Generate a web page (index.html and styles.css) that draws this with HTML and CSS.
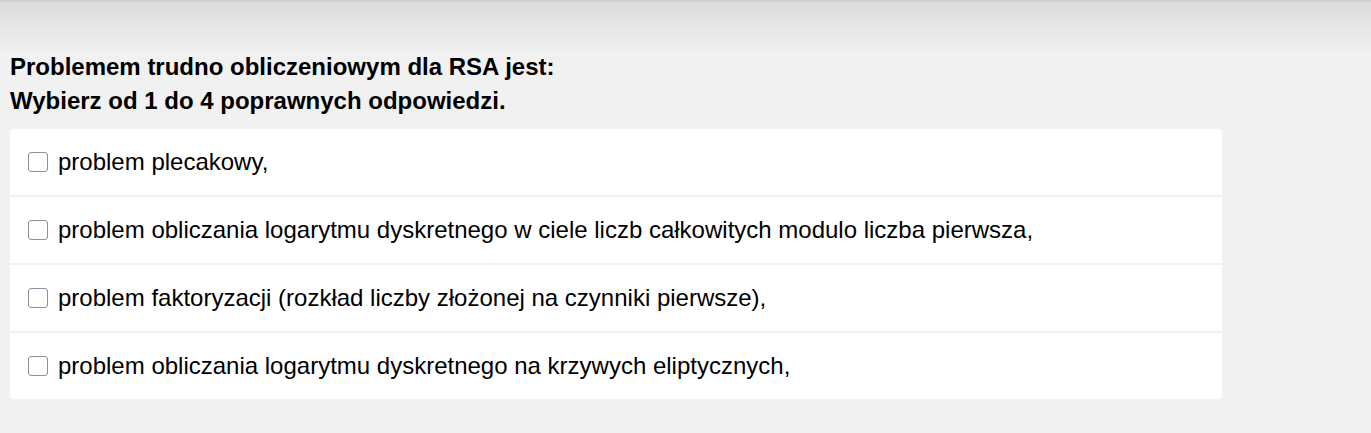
FILE: index.html
```html
<!DOCTYPE html>
<html lang="pl">
<head>
<meta charset="utf-8">
<link rel="stylesheet" href="styles.css">
</head>
<body>
<div class="page">
  <div class="question">
    <div class="q-line">Problemem trudno obliczeniowym dla RSA jest:</div>
    <div class="q-line">Wybierz od 1 do 4 poprawnych odpowiedzi.</div>
  </div>
  <div class="answers">
    <label class="answer"><span class="box"></span><span class="txt">problem plecakowy,</span></label>
    <label class="answer"><span class="box"></span><span class="txt">problem obliczania logarytmu dyskretnego w ciele liczb całkowitych modulo liczba pierwsza,</span></label>
    <label class="answer"><span class="box"></span><span class="txt">problem faktoryzacji (rozkład liczby złożonej na czynniki pierwsze),</span></label>
    <label class="answer"><span class="box"></span><span class="txt">problem obliczania logarytmu dyskretnego na krzywych eliptycznych,</span></label>
  </div>
</div>
</body>
</html>
```
FILE: styles.css
```css
html, body {
  margin: 0;
  padding: 0;
}
body {
  background: #f1f1f1;
  font-family: "Liberation Sans", Arial, sans-serif;
  color: #000;
}
.page {
  min-height: 433px;
  box-sizing: border-box;
  border-top: 2px solid #d0d0d0;
  background: linear-gradient(to bottom, #dcdcdc 0px, #f1f1f1 52px, #f1f1f1 100%);
  padding-top: 48px;
}
.question {
  padding-left: 10px;
  font-size: 24px;
  font-weight: bold;
}
.q-line {
  line-height: 34px;
}
.answers {
  margin: 11px 0 0 10px;
  width: 1212px;
  display: flex;
  flex-direction: column;
  gap: 2px;
}
.answer {
  background: #fff;
  height: 66px;
  display: flex;
  align-items: center;
  padding-left: 18px;
  font-size: 24px;
}
.answer:first-child {
  border-radius: 4px 4px 0 0;
}
.answer:last-child {
  border-radius: 0 0 4px 4px;
}
.box {
  width: 20px;
  height: 20px;
  border: 1px solid #8f8f9d;
  border-radius: 3px;
  box-sizing: border-box;
  background: #fff;
  flex: none;
  margin-right: 10px;
}
.txt {
  line-height: 28px;
}
```
